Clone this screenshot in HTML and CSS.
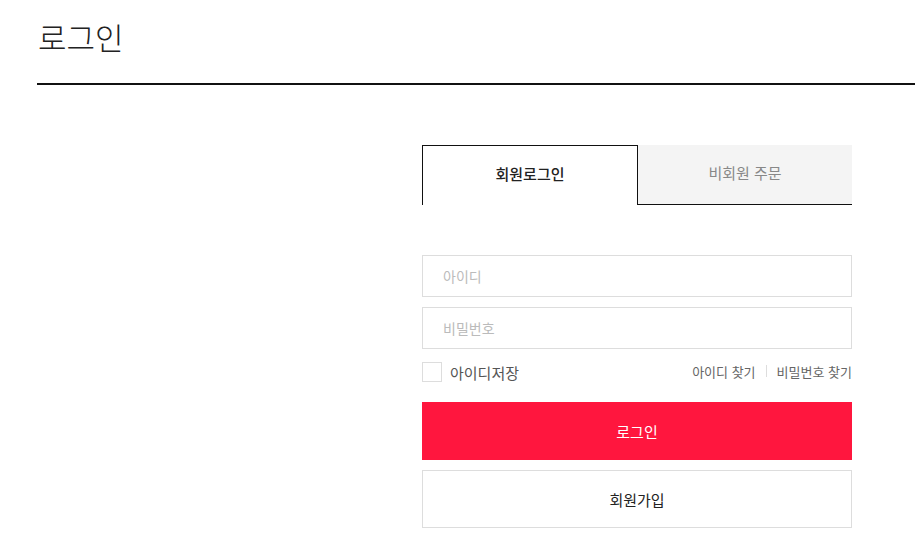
FILE: index.html
```
<!DOCTYPE html>
<html lang="ko">
<head>
    <meta charset="UTF-8">
    <title>로그인</title>
    <link rel="stylesheet" href="styles.css">
</head>
<body>
<div class="wrap">
    <h2 class="page-title">로그인</h2>

    <div class="login-box">
        <ul class="tabs">
            <li class="tab on">회원로그인</li>
            <li class="tab">비회원 주문</li>
        </ul>

        <form class="login-form" onsubmit="return false">
            <input type="text" class="field" placeholder="아이디">
            <input type="password" class="field" placeholder="비밀번호">

            <div class="opts">
                <label class="save-id">
                    <input type="checkbox">
                    <span class="box"></span>
                    아이디저장
                </label>
                <div class="finds">
                    <a href="#">아이디 찾기</a>
                    <span class="bar"></span>
                    <a href="#">비밀번호 찾기</a>
                </div>
            </div>

            <button type="submit" class="btn btn-login">로그인</button>
            <button type="button" class="btn btn-join">회원가입</button>
        </form>
    </div>
</div>
</body>
</html>
```

FILE: styles.css
```
* {
    box-sizing: border-box;
}

body {
    margin: 0;
    overflow-x: hidden;
    font-family: "Noto Sans CJK KR", "Noto Sans", sans-serif;
    color: #222;
    background: #fff;
}

.wrap {
    width: 1200px;
    margin-left: 37px;
}

.page-title {
    margin: 0;
    padding: 14px 0 0 1px;
    height: 85px;
    font-size: 31px;
    font-weight: 300;
    line-height: 46px;
    border-bottom: 2px solid #111;
}

.login-box {
    width: 430px;
    margin: 60px auto 0;
}

.tabs {
    display: flex;
    margin: 0;
    padding: 0;
    list-style: none;
}

.tab {
    flex: 1;
    height: 60px;
    line-height: 56px;
    text-align: center;
    font-size: 15px;
    color: #888;
    background: #f4f4f4;
    border-bottom: 1px solid #111;
}

.tab.on {
    color: #222;
    font-weight: 500;
    background: #fff;
    border: 1px solid #111;
    border-bottom: none;
}

.login-form {
    padding-top: 50px;
}

.field {
    display: block;
    width: 100%;
    height: 42px;
    margin-bottom: 10px;
    padding: 0 20px;
    border: 1px solid #ddd;
    font-family: inherit;
    font-size: 14px;
    color: #222;
    outline: none;
}

.field::placeholder {
    color: #bbb;
}

.opts {
    display: flex;
    justify-content: space-between;
    align-items: center;
    height: 26px;
    margin-top: 1px;
}

.save-id {
    display: flex;
    align-items: center;
    font-size: 15px;
    color: #555;
    cursor: pointer;
}

.save-id input {
    display: none;
}

.save-id .box {
    width: 20px;
    height: 20px;
    margin-right: 8px;
    border: 1px solid #ddd;
}

.finds {
    display: flex;
    align-items: center;
    font-size: 13px;
    margin-top: -2px;
}

.finds a {
    color: #666;
    text-decoration: none;
}

.bar {
    width: 1px;
    height: 12px;
    margin: 0 10px;
    background: #ddd;
}

.btn {
    display: block;
    width: 100%;
    height: 58px;
    border: none;
    font-family: inherit;
    font-size: 15px;
    cursor: pointer;
}

.btn-login {
    margin-top: 17px;
    background: #ff163e;
    color: #fff;
}

.btn-join {
    margin-top: 10px;
    background: #fff;
    color: #222;
    border: 1px solid #ddd;
}
```
